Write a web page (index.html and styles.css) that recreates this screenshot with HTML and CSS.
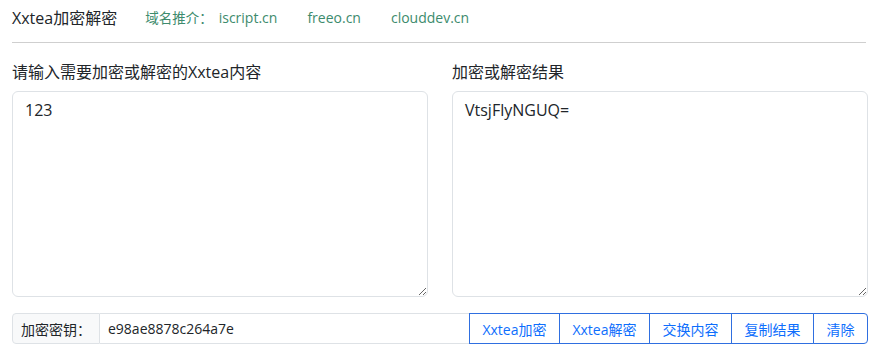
FILE: index.html
```html
<!DOCTYPE html>
<html lang="zh-CN">
<head>
  <meta charset="UTF-8">
  <title>Xxtea加密解密</title>
  <link rel="stylesheet" href="styles.css">
</head>
<body>
  <div class="page">
    <div class="header">
      <span class="brand">Xxtea加密解密</span>
      <span class="domains">域名推介：</span>
      <a class="domain" href="#">iscript.cn</a>
      <a class="domain" href="#">freeo.cn</a>
      <a class="domain" href="#">clouddev.cn</a>
    </div>

    <div class="columns">
      <div class="col">
        <label class="title">请输入需要加密或解密的Xxtea内容</label>
        <textarea class="box">123</textarea>
      </div>
      <div class="col">
        <label class="title">加密或解密结果</label>
        <textarea class="box">VtsjFlyNGUQ=</textarea>
      </div>
    </div>

    <div class="key-group">
      <span class="key-label">加密密钥：</span>
      <input class="key-input" type="text" value="e98ae8878c264a7e">
      <button class="btn">Xxtea加密</button>
      <button class="btn">Xxtea解密</button>
      <button class="btn">交换内容</button>
      <button class="btn">复制结果</button>
      <button class="btn last">清除</button>
    </div>
  </div>
</body>
</html>
```

FILE: styles.css
```css
* {
  box-sizing: border-box;
  margin: 0;
  padding: 0;
}

body {
  font-family: "Open Sans", "Noto Sans CJK SC", sans-serif;
  color: #212529;
  background: #fff;
}

.page {
  padding: 0 10px 0 12px;
}

.header {
  display: flex;
  align-items: center;
  height: 43px;
  padding-bottom: 8px;
  border-bottom: 1px solid #cfcfcf;
  margin-right: 2px;
}

.brand {
  font-size: 16px;
  margin-right: 28px;
}

.domains {
  font-size: 13.5px;
  color: #3d8b6d;
  margin-right: 6px;
}

.domain {
  font-size: 14px;
  color: #3d8b6d;
  text-decoration: none;
  margin-right: 30px;
}

.columns {
  display: flex;
  gap: 24px;
  margin-top: 17px;
}

.col {
  flex: 1;
  display: flex;
  flex-direction: column;
}

.title {
  font-size: 16px;
  line-height: 24px;
  margin-bottom: 7px;
}

.box {
  height: 206px;
  padding: 6px 12px;
  font-family: inherit;
  font-size: 16px;
  line-height: 1.5;
  color: #212529;
  border: 1px solid #dee2e6;
  border-radius: 6px;
  resize: vertical;
  outline: none;
}

.key-group {
  display: flex;
  height: 31px;
  margin-top: 16px;
}

.key-label {
  display: flex;
  align-items: center;
  flex-shrink: 0;
  white-space: nowrap;
  padding: 0 8px;
  font-size: 14px;
  background: #f8f9fa;
  border: 1px solid #dee2e6;
  border-radius: 4px 0 0 4px;
}

.key-input {
  flex: 1;
  min-width: 0;
  padding: 0 8px;
  font-family: inherit;
  font-size: 14px;
  color: #212529;
  border: 1px solid #dee2e6;
  border-left: none;
  border-right: none;
  outline: none;
}

.btn {
  flex-shrink: 0;
  white-space: nowrap;
  padding: 0 12.5px;
  font-family: inherit;
  font-size: 14px;
  color: #0d6efd;
  background: #fff;
  border: 1px solid #2f6fe0;
  margin-left: -1px;
  cursor: pointer;
}

.btn:first-of-type {
  margin-left: 0;
}

.last {
  border-radius: 0 4px 4px 0;
}
```
